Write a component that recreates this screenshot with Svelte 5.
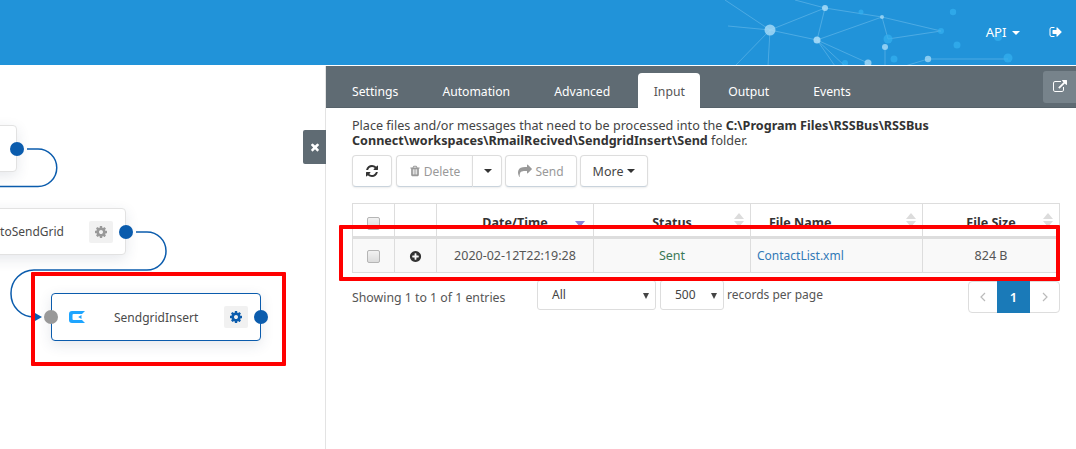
<script>
	const icons = {
		cog: 'M1152 896q0-106-75-181t-181-75-181 75-75 181 75 181 181 75 181-75 75-181zm512-109v222q0 12-8 23t-20 13l-185 28q-19 54-39 91 35 50 107 138 10 12 10 25t-9 23q-27 37-99 108t-94 71q-12 0-26-9l-138-108q-44 23-91 38-16 136-29 186-7 28-36 28h-222q-14 0-24.5-8.5t-11.5-21.5l-28-184q-49-16-90-37l-141 107q-10 9-25 9-14 0-25-11-126-114-165-168-7-10-7-23 0-12 8-23 15-21 51-66.5t54-70.5q-27-50-41-99l-183-27q-13-2-21-12.5t-8-23.5v-222q0-12 8-23t19-13l186-28q14-46 39-92-40-57-107-138-10-12-10-24 0-10 9-23 26-36 98.5-107.5t94.5-71.5q13 0 26 10l138 107q44-23 91-38 16-136 29-186 7-28 36-28h222q14 0 24.5 8.5t11.5 21.5l28 184q49 16 90 37l142-107q9-9 24-9 13 0 25 10 129 119 165 170 7 8 7 22 0 12-8 23-15 21-51 66.5t-54 70.5q26 50 41 98l183 28q13 2 21 12.5t8 23.5z',
		refresh: 'M1639 1056q0 5-1 7-64 268-268 434.5t-478 166.5q-146 0-282.5-55t-243.5-157l-129 129q-19 19-45 19t-45-19-19-45v-448q0-26 19-45t45-19h448q26 0 45 19t19 45-19 45l-137 137q71 66 161 102t187 36q134 0 250-65t186-179q11-17 53-117 8-23 30-23h192q13 0 22.5 9.5t9.5 22.5zm25-800v448q0 26-19 45t-45 19h-448q-26 0-45-19t-19-45 19-45l138-138q-148-137-349-137-134 0-250 65t-186 179q-11 17-53 117-8 23-30 23h-199q-13 0-22.5-9.5t-9.5-22.5v-7q65-268 270-434.5t480-166.5q146 0 284 55.5t245 156.5l130-129q19-19 45-19t45 19 19 45z',
		trash: 'M704 1376v-704q0-14-9-23t-23-9h-64q-14 0-23 9t-9 23v704q0 14 9 23t23 9h64q14 0 23-9t9-23zm256 0v-704q0-14-9-23t-23-9h-64q-14 0-23 9t-9 23v704q0 14 9 23t23 9h64q14 0 23-9t9-23zm256 0v-704q0-14-9-23t-23-9h-64q-14 0-23 9t-9 23v704q0 14 9 23t23 9h64q14 0 23-9t9-23zm-544-992h448l-48-117q-7-9-17-11h-317q-10 2-17 11zm928 32v64q0 14-9 23t-23 9h-96v948q0 83-47 143.5t-113 60.5h-832q-66 0-113-58.5t-47-141.5v-952h-96q-14 0-23-9t-9-23v-64q0-14 9-23t23-9h309l70-167q15-37 54-63t79-26h320q40 0 79 26t54 63l70 167h309q14 0 23 9t9 23z',
		share: 'M1792 640q0 26-19 45l-512 512q-19 19-45 19t-45-19-19-45v-256h-224q-98 0-175.5 6t-154 21.5-133 42.5-105.5 69.5-80 101-48.5 138.5-17.5 181q0 55 5 123 0 6 2.5 23.5t2.5 26.5q0 15-8.5 25t-23.5 10q-16 0-28-17-7-9-13-22t-13.5-30-10.5-24q-127-285-127-451 0-199 53-333 162-403 875-403h224v-256q0-26 19-45t45-19 45 19l512 512q19 19 19 45z',
		plus: 'M1344 960v-128q0-26-19-45t-45-19h-256v-256q0-26-19-45t-45-19h-128q-26 0-45 19t-19 45v256h-256q-26 0-45 19t-19 45v128q0 26 19 45t45 19h256v256q0 26 19 45t45 19h128q26 0 45-19t19-45v-256h256q26 0 45-19t19-45zm320-64q0 209-103 385.5t-279.5 279.5-385.5 103-385.5-103-279.5-279.5-103-385.5 103-385.5 279.5-279.5 385.5-103 385.5 103 279.5 279.5 103 385.5z',
		signout: 'M704 1440q0 4 1 20t.5 26.5-3 23.5-10 19.5-20.5 6.5h-320q-119 0-203.5-84.5t-84.5-203.5v-704q0-119 84.5-203.5t203.5-84.5h320q13 0 22.5 9.5t9.5 22.5q0 4 1 20t.5 26.5-3 23.5-10 19.5-20.5 6.5h-320q-66 0-113 47t-47 113v704q0 66 47 113t113 47h312l11.5 1 11.5 3 8 5.5 7 9 2 13.5zm928-544q0 26-19 45l-544 544q-19 19-45 19t-45-19-19-45v-288h-448q-26 0-45-19t-19-45v-384q0-26 19-45t45-19h448v-288q0-26 19-45t45-19 45 19l544 544q19 19 19 45z',
		external: 'M1408 928v320q0 119-84.5 203.5t-203.5 84.5h-832q-119 0-203.5-84.5t-84.5-203.5v-832q0-119 84.5-203.5t203.5-84.5h704q14 0 23 9t9 23v64q0 14-9 23t-23 9h-704q-66 0-113 47t-47 113v832q0 66 47 113t113 47h832q66 0 113-47t47-113v-320q0-14 9-23t23-9h64q14 0 23 9t9 23zm384-864v512q0 26-19 45t-45 19-45-19l-176-176-652 652q-10 10-23 10t-23-10l-114-114q-10-10-10-23t10-23l652-652-176-176q-19-19-19-45t19-45 45-19h512q26 0 45 19t19 45z',
		times: 'M1490 1322q0 40-28 68l-136 136q-28 28-68 28t-68-28l-294-294-294 294q-28 28-68 28t-68-28l-136-136q-28-28-28-68t28-68l294-294-294-294q-28-28-28-68t28-68l136-136q28-28 68-28t68 28l294 294 294-294q28-28 68-28t68 28l136 136q28 28 28 68t-28 68l-294 294 294 294q28 28 28 68z'
	};

	const tabs = ['Settings', 'Automation', 'Advanced', 'Input', 'Output', 'Events'];

	// background network in the header: [x, y, r, opacity]
	const dots = [
		[770, 30, 5.5, 0.55], [825, 8, 3, 0.6], [817, 40, 3.5, 0.65], [861, 12, 2.5, 0.12],
		[882, 17, 2, 0.5], [888, 39, 4.5, 0.1], [885, 47, 3, 0.55], [868, 63, 3.5, 0.55],
		[894, 59, 3.5, 0.12], [845, 63, 3, 0.12], [928, 59, 3.2, 0.5], [941, 31, 3, 0.12],
		[953, 12, 3.2, 0.2], [957, 45, 3.5, 0.12], [1008, 58, 4.5, 0.1], [998, 37, 4, 0.06]
	];
	const lines = [
		[770, 30, 825, 8], [770, 30, 817, 40], [825, 8, 817, 40], [825, 8, 882, 17],
		[817, 40, 882, 17], [817, 40, 868, 63], [817, 40, 845, 66], [817, 40, 835, 66],
		[888, 39, 941, 31], [882, 17, 941, 31], [885, 47, 885, 66], [928, 59, 1008, 59],
		[770, 30, 735, 66], [770, 30, 768, 66], [770, 30, 728, 26], [725, 0, 770, 30],
		[795, 0, 825, 8], [882, 17, 888, 39], [928, 59, 905, 66]
	];
</script>

<div class="page">
	<header class="topbar">
		<svg class="network" width="1076" height="65" viewBox="0 0 1076 65">
			{#each lines as l}
				<line x1={l[0]} y1={l[1]} x2={l[2]} y2={l[3]} stroke="#9fd6f5" stroke-opacity="0.35" />
			{/each}
			{#each dots as d}
				<circle cx={d[0]} cy={d[1]} r={d[2]} fill={d[3] < 0.3 ? '#35b0f0' : '#a9dcf7'} fill-opacity={d[3] < 0.3 ? 0.7 : d[3] + 0.25} />
			{/each}
		</svg>
		<span class="api">API <i class="caret white"></i></span>
		<svg class="logout" viewBox="0 0 1792 1792"><path d={icons.signout} /></svg>
	</header>

	<main class="body">
		<section class="canvas">
			<svg class="wires" width="325" height="383" viewBox="0 66 325 383" fill="none" stroke="#0b5cad" stroke-width="1.5">
				<path d="M27 149H38a18.75 18.75 0 0 1 0 37.5H0" />
				<path d="M136 232H147a19 19 0 0 1 0 38H34a23 23 0 0 0-23 23v1a23 23 0 0 0 23 23H38" />
				<path d="M35 313l7 4-7 4z" fill="#0b5cad" stroke="none" />
			</svg>

			<div class="node node-one">
				<span class="port out"></span>
			</div>
			<div class="node node-two">
				<span class="label">toSendGrid</span>
				<span class="gear"><svg viewBox="0 0 1792 1792"><path d={icons.cog} /></svg></span>
				<span class="port out"></span>
			</div>
			<div class="node node-three">
				<span class="port in"></span>
				<svg class="logo" viewBox="0 0 16 12">
					<path d="M3 0H16L13 3H4.5a1 1 0 0 0-1 1v4a1 1 0 0 0 1 1H13l3 3H3a3 3 0 0 1-3-3V3a3 3 0 0 1 3-3z" fill="#1ea5ff" />
					<path d="M12.5 4v4L9.2 6z" fill="#1ea5ff" />
				</svg>
				<span class="label">SendgridInsert</span>
				<span class="gear active"><svg viewBox="0 0 1792 1792"><path d={icons.cog} /></svg></span>
				<span class="port out"></span>
			</div>

			<button class="close"><svg viewBox="0 0 1792 1792"><path d={icons.times} /></svg></button>
		</section>

		<section class="panel">
			<nav class="tabs">
				{#each tabs as tab}
					<span class="tab" class:current={tab === 'Input'}>{tab}</span>
				{/each}
				<span class="popout"><svg viewBox="0 0 1792 1792"><path d={icons.external} /></svg></span>
			</nav>

			<div class="content">
				<p class="intro">
					Place files and/or messages that need to be processed into the <b>C:\Program Files\RSSBus\RSSBus Connect\workspaces\RmailRecived\SendgridInsert\Send</b> folder.
				</p>

				<div class="toolbar">
					<button class="btn icon-only"><svg viewBox="0 0 1792 1792"><path d={icons.refresh} /></svg></button>
					<div class="group">
						<button class="btn muted delete"><svg viewBox="0 0 1792 1792"><path d={icons.trash} /></svg>Delete</button>
						<button class="btn split"><i class="caret"></i></button>
					</div>
					<button class="btn muted send"><svg viewBox="0 0 1792 1792"><path d={icons.share} /></svg>Send</button>
					<button class="btn more">More <i class="caret"></i></button>
				</div>

				<table>
					<colgroup>
						<col style="width:42px" /><col style="width:42px" /><col style="width:157px" /><col style="width:157px" /><col style="width:172px" /><col style="width:137px" />
					</colgroup>
					<thead>
						<tr>
							<th><span class="check"></span></th>
							<th></th>
							<th class="sorted">Date/Time</th>
							<th class="sortable">Status</th>
							<th class="sortable name">File Name</th>
							<th class="sortable">File Size</th>
						</tr>
					</thead>
					<tbody>
						<tr>
							<td><span class="check"></span></td>
							<td><svg class="plus" viewBox="0 0 1792 1792"><path d={icons.plus} /></svg></td>
							<td>2020-02-12T22:19:28</td>
							<td class="sent">Sent</td>
							<td class="file"><a href="#file">ContactList.xml</a></td>
							<td>824 B</td>
						</tr>
					</tbody>
				</table>

				<div class="footer">
					<span class="info">Showing 1 to 1 of 1 entries</span>
					<span class="select all">All<i class="arrow"></i></span>
					<span class="select size">500<i class="arrow"></i></span>
					<span class="per-page">records per page</span>
					<div class="pager">
						<span class="page-btn"><svg viewBox="0 0 8 12"><path d="M6 2L2 6l4 4" /></svg></span>
						<span class="page-btn on">1</span>
						<span class="page-btn last"><svg viewBox="0 0 8 12"><path d="M2 2l4 4-4 4" /></svg></span>
					</div>
				</div>
			</div>
		</section>
	</main>

	<div class="mark mark-node"></div>
	<div class="mark mark-row"></div>
</div>

<style>
	:global(body) {
		margin: 0;
		background: #fff;
	}

	.page {
		position: relative;
		width: 1076px;
		height: 449px;
		overflow: hidden;
		font-family: 'Noto Sans', 'Open Sans', sans-serif;
		font-size: 12px;
		color: #555;
	}

	.topbar {
		position: relative;
		display: flex;
		align-items: center;
		justify-content: flex-end;
		height: 65px;
		box-sizing: border-box;
		padding: 0 13px 2px 0;
		background: #2193d9;
		color: #fff;
	}

	.network {
		position: absolute;
		left: 0;
		top: 0;
	}

	.api {
		position: relative;
		font-size: 13.2px;
		margin-right: 29px;
	}

	.logout {
		position: relative;
		width: 14px;
		height: 14px;
		fill: #fff;
	}

	.caret {
		display: inline-block;
		width: 0;
		height: 0;
		margin-left: 2px;
		vertical-align: middle;
		border-top: 4px solid #333;
		border-left: 4px solid transparent;
		border-right: 4px solid transparent;
	}

	.caret.white {
		border-top-color: #fff;
	}

	.body {
		display: flex;
		height: 384px;
		margin-top: 1px;
	}

	.canvas {
		position: relative;
		width: 325px;
		flex: none;
		border-right: 1px solid #e3e3e3;
	}

	.wires {
		position: absolute;
		left: 0;
		top: 0;
	}

	/* diagram nodes sit on a free canvas */
	.node {
		position: absolute;
		display: flex;
		align-items: center;
		box-sizing: border-box;
		height: 47px;
		background: #fff;
		border: 1px solid #e2e2e2;
		border-radius: 4px;
		box-shadow: 0 4px 14px rgba(40, 60, 90, 0.12);
		font-size: 12px;
		color: #4a4a4a;
	}

	.node-one {
		left: -60px;
		top: 59px;
		width: 77px;
	}

	.node-two {
		left: -60px;
		top: 142px;
		width: 186px;
	}

	.node-three {
		left: 51px;
		top: 227px;
		width: 210px;
		height: 48px;
		border-color: #0b5cad;
	}

	.node .label {
		flex: 1;
		text-align: center;
	}

	.node-two .label {
		text-align: right;
		padding-right: 61px;
	}

	.node-three .label {
		position: absolute;
		left: 62px;
	}

	.gear {
		position: absolute;
		right: 12px;
		top: 12px;
		width: 24px;
		height: 22px;
		display: flex;
		align-items: center;
		justify-content: center;
		background: #f1f1f1;
		border-radius: 2px;
	}

	.gear svg {
		width: 14px;
		height: 14px;
		fill: #999;
	}

	.gear.active svg {
		fill: #0b5cad;
	}

	.port {
		position: absolute;
		top: 50%;
		width: 14px;
		height: 14px;
		margin-top: -7px;
		border-radius: 50%;
		background: #0b5cad;
	}

	.port.out {
		right: -8px;
	}

	.port.in {
		left: -8px;
		background: #999;
	}

	.logo {
		position: absolute;
		left: 17px;
		top: 17px;
		width: 16px;
		height: 12px;
	}

	.close {
		position: absolute;
		right: -1px;
		top: 64px;
		width: 23px;
		height: 34px;
		padding: 0;
		border: 0;
		border-radius: 2px 0 0 2px;
		background: #5f6b73;
		display: flex;
		align-items: center;
		justify-content: center;
	}

	.close svg {
		width: 12px;
		height: 12px;
		fill: #fff;
	}

	.panel {
		flex: 1;
		min-width: 0;
	}

	.tabs {
		position: relative;
		display: flex;
		align-items: flex-end;
		height: 42px;
		padding-left: 4px;
		background: #5f6b73;
		box-shadow: inset 0 -1px 0 #56626a;
	}

	.tab {
		height: 35px;
		line-height: 37px;
		padding: 0 22px;
		color: #fff;
		font-size: 12.2px;
		border-radius: 4px 4px 0 0;
	}

	.tab.current {
		background: #fff;
		color: #555;
		padding: 0 15.5px;
		margin: 0 6px;
	}

	.popout {
		position: absolute;
		right: 0;
		top: 5px;
		width: 33px;
		height: 32px;
		display: flex;
		align-items: center;
		justify-content: center;
		background: #77838b;
		border-radius: 3px 0 0 3px;
	}

	.popout svg {
		width: 14px;
		height: 14px;
		fill: #fff;
	}

	.content {
		padding: 10px 16px 0 26px;
	}

	.intro {
		margin: 0;
		font-size: 12.6px;
		line-height: 15px;
		color: #444;
	}

	.intro b {
		color: #333;
	}

	.toolbar {
		display: flex;
		gap: 3px;
		margin-top: 7px;
	}

	.btn {
		display: inline-flex;
		align-items: center;
		justify-content: center;
		height: 32px;
		box-sizing: border-box;
		padding: 0 12px;
		font: inherit;
		font-size: 12px;
		color: #444;
		background: #fff;
		border: 1px solid #ddd;
		border-bottom-color: #c9d3dc;
		border-radius: 4px;
		box-shadow: 0 1px 2px rgba(0, 0, 0, 0.08);
	}

	.btn svg {
		width: 12px;
		height: 12px;
		fill: currentColor;
	}

	.icon-only {
		width: 40px;
		margin-right: 1px;
	}

	.icon-only svg {
		width: 14px;
		height: 14px;
		fill: #333;
	}

	.muted {
		color: #999;
	}

	.muted svg {
		margin-right: 3px;
	}

	.group {
		display: flex;
	}

	.delete {
		width: 76px;
		padding: 0;
		border-radius: 4px 0 0 4px;
		border-right: 0;
	}

	.split {
		width: 30px;
		padding: 0;
		border-radius: 0 4px 4px 0;
	}

	.send {
		width: 72px;
		padding: 0;
	}

	.send svg {
		width: 14px;
		height: 14px;
	}

	.more {
		width: 68px;
		padding: 0;
		font-size: 12.5px;
	}

	.more .caret {
		margin-left: 4px;
	}

	table {
		margin-top: 16px;
		width: 708px;
		table-layout: fixed;
		border-collapse: collapse;
		font-size: 12.5px;
		color: #555;
	}

	th,
	td {
		border: 1px solid #ddd;
		text-align: center;
		padding: 0;
		vertical-align: middle;
	}

	th {
		position: relative;
		height: 34px;
		border-bottom: 3px solid #ddd;
		color: #333;
		font-weight: 700;
		padding-top: 5px;
		box-sizing: border-box;
	}

	th.name {
		text-align: left;
		padding-left: 18px;
	}

	td {
		height: 33px;
		background: #f9f9f9;
	}

	.sortable::after {
		content: '';
		position: absolute;
		right: 6px;
		top: 9px;
		border-left: 5px solid transparent;
		border-right: 5px solid transparent;
		border-bottom: 6px solid #dcdcdc;
	}

	.sortable::before {
		content: '';
		position: absolute;
		right: 6px;
		top: 17px;
		border-left: 5px solid transparent;
		border-right: 5px solid transparent;
		border-top: 6px solid #dcdcdc;
	}

	.sorted::after {
		content: '';
		position: absolute;
		right: 8px;
		top: 17px;
		border-left: 5px solid transparent;
		border-right: 5px solid transparent;
		border-top: 6px solid #8a84d6;
	}

	.check {
		display: inline-block;
		width: 11px;
		height: 11px;
		vertical-align: middle;
		border: 1px solid #b5b5b5;
		border-radius: 2px;
		background: linear-gradient(#f2f2f2, #dcdcdc);
	}

	.plus {
		width: 13px;
		height: 13px;
		fill: #333;
		vertical-align: middle;
	}

	.sent {
		color: #3b7a57;
	}

	.file {
		text-align: left;
		padding-left: 6px;
		font-size: 12px;
	}

	.file a {
		color: #337ab7;
		text-decoration: none;
	}

	.footer {
		display: flex;
		align-items: flex-start;
		margin-top: 7px;
		position: relative;
	}

	.info {
		width: 185px;
		padding-top: 9px;
		font-size: 12.3px;
		white-space: nowrap;
	}

	.select {
		position: relative;
		box-sizing: border-box;
		height: 30px;
		line-height: 27px;
		border: 1px solid #ddd;
		border-radius: 3px;
		padding-left: 14px;
		color: #444;
	}

	.all {
		width: 119px;
		margin-right: 4px;
	}

	.size {
		width: 64px;
	}

	.arrow {
		position: absolute;
		right: 6px;
		top: 12px;
		border-left: 3px solid transparent;
		border-right: 3px solid transparent;
		border-top: 6px solid #444;
	}

	.per-page {
		margin-left: 3px;
		padding-top: 6px;
	}

	.pager {
		display: flex;
		margin-left: auto;
		margin-top: 1px;
		border: 1px solid #ddd;
		border-radius: 4px;
		height: 32px;
		box-sizing: border-box;
	}

	.page-btn {
		display: flex;
		align-items: center;
		justify-content: center;
		width: 28px;
		color: #fff;
	}

	.page-btn.last {
		width: 29px;
	}

	.page-btn.on {
		width: 33px;
		background: #1a7ab8;
		margin: -1px 0;
		font-size: 13px;
		font-weight: 600;
	}

	.page-btn svg {
		width: 8px;
		height: 12px;
		fill: none;
		stroke: #bbb;
		stroke-width: 1.2;
	}

	.mark {
		position: absolute;
		border: 4px solid #f00;
		box-sizing: border-box;
		border-radius: 1px;
		pointer-events: none;
	}

	.mark-node {
		left: 31px;
		top: 272px;
		width: 255px;
		height: 94px;
	}

	.mark-row {
		left: 339px;
		top: 225px;
		width: 721px;
		height: 56px;
	}
</style>
